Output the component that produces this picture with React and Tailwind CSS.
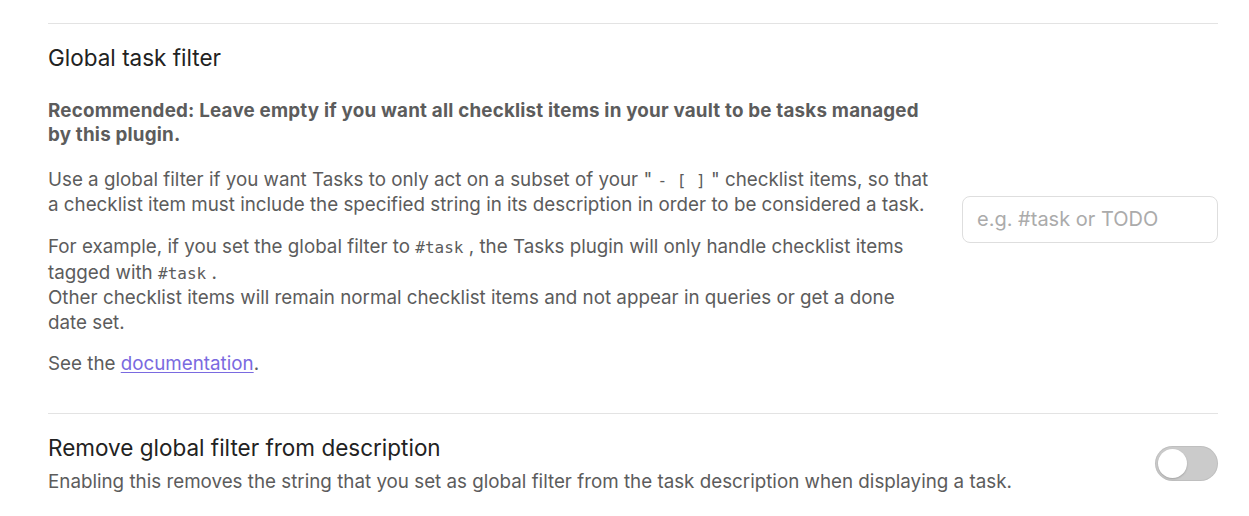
import React, { useState } from 'react';

const font = { fontFamily: 'Inter, "Noto Sans", sans-serif' };

function Code({ children }) {
  return (
    <code className="font-['DejaVu_Sans_Mono',monospace] text-[16px] text-[#5c5c5c]">
      {children}
    </code>
  );
}

function Toggle({ on, onChange }) {
  return (
    <button
      onClick={() => onChange(!on)}
      className={`relative flex h-[35px] w-[63px] shrink-0 items-center rounded-full px-[3px] shadow-[inset_0_0_0_1px_rgba(0,0,0,0.06)] ${
        on ? 'justify-end bg-[#8a6cf0]' : 'justify-start bg-[#cbcbcb]'
      }`}
      aria-label="Toggle"
    >
      <span className="h-[29px] w-[29px] rounded-full bg-white shadow-[0_1px_2px_rgba(0,0,0,0.2)]" />
    </button>
  );
}

export default function App() {
  const [filter, setFilter] = useState('');
  const [removeFilter, setRemoveFilter] = useState(false);

  return (
    <div className="min-h-[516px] bg-white pl-[48px] pr-[31px] pt-[23px] antialiased" style={font}>
      <div className="flex items-center border-t border-[#e3e3e3] pb-[18px] pt-[19px]">
        <div className="w-[885px] shrink-0">
          <div className="text-[22.5px] leading-[30px] text-[#222]">Global task filter</div>
          <div className="mt-[26px] text-[18.8px] leading-[24px] text-[#5c5c5c]">
            <p className="font-bold tracking-[0.2px]">
              Recommended: Leave empty if you want all checklist items in your vault to be tasks managed by this plugin.
            </p>
            <p className="mt-[21px]">
              Use a global filter if you want Tasks to only act on a subset of your " <Code>- [ ]</Code> " checklist items, so that a checklist item must include the specified string in its description in order to be considered a task.
            </p>
            <p className="mt-[18px] leading-[24.5px]">
              For example, if you set the global filter to <Code>#task</Code> , the Tasks plugin will only handle checklist items tagged with <Code>#task</Code> .
              <br />
              Other checklist items will remain normal checklist items and not appear in queries or get a done date set.
            </p>
            <p className="mt-[17px] mb-[19px]">
              See the{' '}
              <a href="#" className="text-[#7a6ae0] underline underline-offset-2">
                documentation
              </a>
              .
            </p>
          </div>
        </div>
        <div className="ml-auto">
          <input
            type="text"
            value={filter}
            onChange={(e) => setFilter(e.target.value)}
            placeholder="e.g. #task or TODO"
            className="h-[47px] w-[256px] rounded-[8px] border border-[#dedede] bg-white px-[14px] text-[20px] text-[#222] outline-none placeholder:text-[#ababab]"
          />
        </div>
      </div>

      <div className="flex items-center border-t border-[#e3e3e3] pb-[18px] pt-[19px]">
        <div className="flex-1">
          <div className="text-[22.5px] leading-[30px] text-[#222]">Remove global filter from description</div>
          <div className="mt-[7px] text-[18.8px] leading-[24px] text-[#5c5c5c]">
            Enabling this removes the string that you set as global filter from the task description when displaying a task.
          </div>
        </div>
        <Toggle on={removeFilter} onChange={setRemoveFilter} />
      </div>
    </div>
  );
}
